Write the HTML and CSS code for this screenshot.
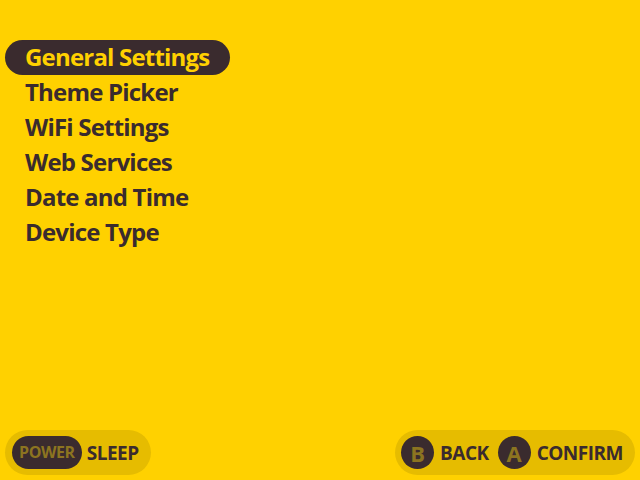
FILE: index.html
```html
<!DOCTYPE html>
<html>
<head>
<meta charset="utf-8">
<link rel="stylesheet" href="styles.css">
</head>
<body>
<div class="screen">
  <ul class="menu">
    <li class="item selected">General Settings</li>
    <li class="item">Theme Picker</li>
    <li class="item">WiFi Settings</li>
    <li class="item">Web Services</li>
    <li class="item">Date and Time</li>
    <li class="item">Device Type</li>
  </ul>
  <div class="footer">
    <div class="bar">
      <span class="pill">POWER</span>
      <span class="label">SLEEP</span>
    </div>
    <div class="bar">
      <span class="btn">B</span>
      <span class="label">BACK</span>
      <span class="btn">A</span>
      <span class="label">CONFIRM</span>
    </div>
  </div>
</div>
</body>
</html>
```
FILE: styles.css
```css
html, body {
  margin: 0;
  padding: 0;
  background: #ffd100;
}
.screen {
  width: 640px;
  height: 480px;
  display: flex;
  flex-direction: column;
  justify-content: space-between;
  font-family: "Open Sans", "Noto Sans", sans-serif;
  color: #3a2b2e;
  box-sizing: border-box;
  padding: 40px 5px 5px 5px;
}
.menu {
  list-style: none;
  margin: 0;
  padding: 0;
  display: flex;
  flex-direction: column;
  align-items: flex-start;
}
.item {
  height: 35px;
  line-height: 34px;
  padding: 0 20px;
  font-size: 24px;
  font-weight: 700;
  letter-spacing: -0.8px;
  border-radius: 18px;
}
.item.selected {
  background: #3a2b2e;
  color: #ffd100;
}
.footer {
  display: flex;
  justify-content: space-between;
  align-items: center;
}
.bar {
  height: 45px;
  box-sizing: border-box;
  background: #e6bc00;
  border-radius: 23px;
  display: flex;
  align-items: center;
  padding: 0 8px 0 6px;
  gap: 5px;
}
.pill {
  background: #3a2b2e;
  color: #8c7420;
  height: 33px;
  line-height: 33px;
  border-radius: 17px;
  padding: 0 7px;
  margin-left: 1px;
  font-size: 16px;
  font-weight: 700;
  letter-spacing: -0.4px;
}
.btn {
  width: 33px;
  height: 33px;
  border-radius: 50%;
  background: #3a2b2e;
  color: #8c7420;
  display: flex;
  align-items: center;
  justify-content: center;
  font-size: 22px;
  font-weight: 700;
  margin-right: 1px;
}
.label {
  font-size: 19px;
  font-weight: 700;
  letter-spacing: -0.5px;
  margin-right: 4px;
}
```
